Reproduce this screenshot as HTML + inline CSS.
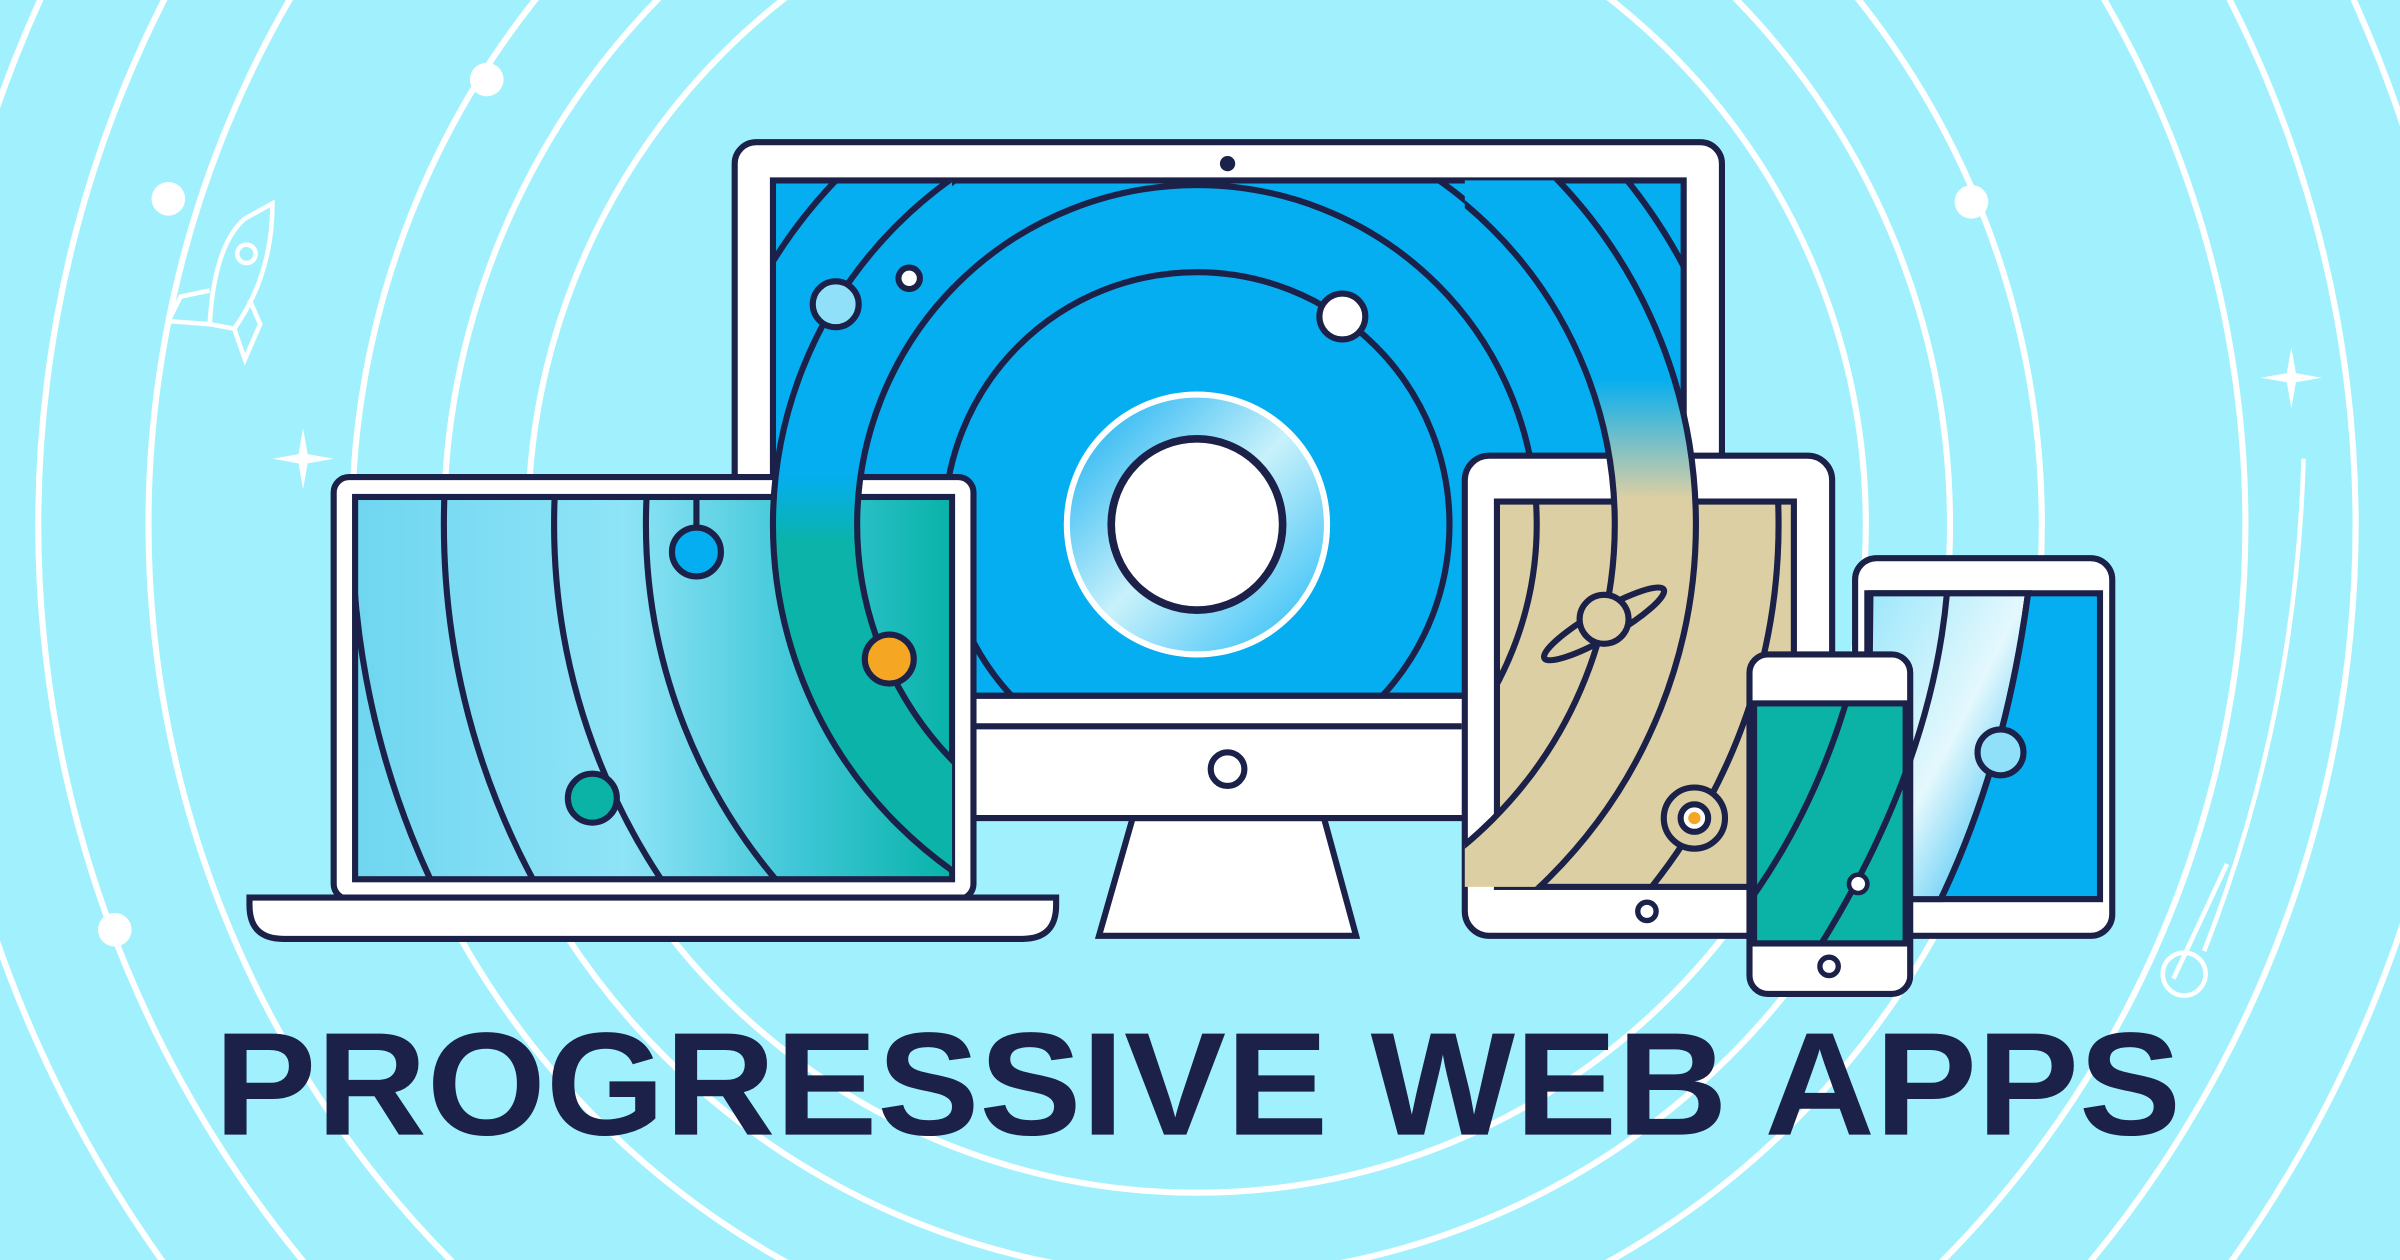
<!DOCTYPE html>
<html><head><meta charset="utf-8"><style>
html,body{margin:0;padding:0;background:#a0f0fd;overflow:hidden;width:2400px;height:1260px;position:relative}
svg{display:block;position:absolute;left:0;top:0}
</style></head><body>
<svg width="2400" height="1260" viewBox="0 0 1568 824" preserveAspectRatio="none" xmlns="http://www.w3.org/2000/svg">
<defs>
<linearGradient id="lap" x1="0" y1="0" x2="1" y2="0">
<stop offset="0" stop-color="#6fd6f0"/><stop offset="0.45" stop-color="#8fe4f7"/><stop offset="0.75" stop-color="#3cc6d6"/><stop offset="1" stop-color="#08b3a8"/></linearGradient>
<linearGradient id="bandL" gradientUnits="userSpaceOnUse" x1="0" y1="118" x2="0" y2="575">
<stop offset="0" stop-color="#04aef0"/><stop offset="0.42" stop-color="#04aef0"/><stop offset="0.52" stop-color="#0bb3a8"/><stop offset="1" stop-color="#0bb3a8"/></linearGradient>
<linearGradient id="bandR" gradientUnits="userSpaceOnUse" x1="0" y1="118" x2="0" y2="580">
<stop offset="0" stop-color="#04aef0"/><stop offset="0.28" stop-color="#04aef0"/><stop offset="0.45" stop-color="#dccfa3"/><stop offset="1" stop-color="#dccfa3"/></linearGradient>
<linearGradient id="ring" x1="0" y1="0" x2="1" y2="1">
<stop offset="0" stop-color="#0aaaf0"/><stop offset="0.5" stop-color="#c8f1fb"/><stop offset="1" stop-color="#20b8f5"/></linearGradient>
<linearGradient id="t2" x1="0" y1="0" x2="1" y2="1">
<stop offset="0" stop-color="#9be7fb"/><stop offset="0.5" stop-color="#e4f8fd"/><stop offset="1" stop-color="#04aef0"/></linearGradient>
<clipPath id="mon"><rect x="505" y="118" width="595" height="337"/></clipPath>
<clipPath id="lapc"><rect x="232" y="325" width="390" height="250"/></clipPath>
<clipPath id="tabc"><rect x="978" y="328" width="194" height="252"/></clipPath>
<clipPath id="t2c"><rect x="1220" y="388" width="152" height="200"/></clipPath>
<clipPath id="phc"><rect x="1146" y="460" width="99" height="157"/></clipPath>
<clipPath id="bl"><rect x="232" y="118" width="390" height="457"/></clipPath>
<clipPath id="br"><rect x="957" y="118" width="215" height="462"/></clipPath>
</defs>
<rect width="1568" height="824" rx="22" fill="#a0f0fd"/>
<g fill="none" stroke="#fff" stroke-width="4">
<circle cx="782" cy="343" r="437"/>
<circle cx="782" cy="343" r="492"/>
<circle cx="782" cy="343" r="552"/>
<circle cx="782" cy="343" r="685"/>
<circle cx="782" cy="343" r="757"/>
<circle cx="782" cy="343" r="830"/>
</g>
<g fill="#fff"><circle cx="110" cy="130" r="11"/><circle cx="318" cy="52" r="11"/><circle cx="1288" cy="132" r="11"/><circle cx="75" cy="608" r="11"/></g>
<g fill="#fff">
<path d="M198 280 L201 297 L218 300 L201 303 L198 320 L195 303 L178 300 L195 297Z"/>
<path d="M1075 125 L1078 142 L1095 145 L1078 148 L1075 165 L1072 148 L1055 145 L1072 142Z"/>
<path d="M1497 227 L1500 244 L1517 247 L1500 250 L1497 267 L1494 250 L1477 247 L1494 244Z"/>
</g>
<g fill="none" stroke="#fff" stroke-width="3">
<path d="M178 133 L160 143 Q140 160 137 212 L153 215 Q178 180 178 133Z"/><circle cx="161" cy="166" r="6"/>
<path d="M137 190 L118 194 L110 210 L137 212"/><path d="M153 215 L160 235 L170 212 L163 196"/>
<path d="M1455 565 L1420 640"/><circle cx="1427" cy="637" r="14"/><path d="M1505 300 Q1500 470 1440 622"/>
</g>
<!-- monitor -->
<g stroke="#1b2148" stroke-width="4">
<path d="M740 535 L865 535 L886 612 L718 612Z" fill="#fff"/>
<rect x="480" y="93" width="645" height="442" rx="14" fill="#fff"/>
<rect x="505" y="118" width="595" height="337" fill="#04aef0"/>
<line x1="635" y1="475" x2="955" y2="475"/>
<line x1="480" y1="455" x2="1125" y2="455"/>
</g>
<circle cx="802" cy="107" r="5" fill="#1b2148"/>
<circle cx="802" cy="503" r="11" fill="#fff" stroke="#1b2148" stroke-width="4"/>
<g clip-path="url(#mon)" fill="none" stroke="#1b2148" stroke-width="4">
<circle cx="782" cy="343" r="165"/>
<circle cx="782" cy="343" r="222"/>
<circle cx="782" cy="343" r="360"/>
<circle cx="782" cy="343" r="275" />
<circle cx="782" cy="343" r="326"/>
<circle cx="782" cy="343" r="420"/>
</g>
<!-- laptop -->
<g stroke="#1b2148" stroke-width="4">
<rect x="218" y="312" width="418" height="276" rx="10" fill="#fff"/>
<rect x="232" y="325" width="390" height="250" fill="url(#lap)"/>
<path d="M163 587 L690 587 L690 592 Q690 614 668 614 L185 614 Q163 614 163 592Z" fill="#fff"/>
</g>
<g clip-path="url(#lapc)" fill="none" stroke="#1b2148" stroke-width="4">
<circle cx="782" cy="343" r="420"/><circle cx="782" cy="343" r="360"/><circle cx="782" cy="343" r="492"/><circle cx="782" cy="343" r="552"/>
<line x1="455" y1="325" x2="455" y2="345"/>
</g>
<!-- tablet -->
<g stroke="#1b2148" stroke-width="4">
<rect x="957" y="298" width="240" height="314" rx="16" fill="#fff"/>
<rect x="978" y="328" width="194" height="252" fill="#dccfa3"/>
</g>
<circle cx="1076" cy="596" r="6" fill="#fff" stroke="#1b2148" stroke-width="3.5"/>
<g clip-path="url(#tabc)" fill="none" stroke="#1b2148" stroke-width="4">
<circle cx="782" cy="343" r="380"/><circle cx="782" cy="343" r="222"/>
</g>
<!-- gradient band -->
<g clip-path="url(#bl)">
<path d="M782 343 m-277 0 a277 277 0 1 0 554 0 a277 277 0 1 0 -554 0 Z M782 343 m-222 0 a222 222 0 1 1 444 0 a222 222 0 1 1 -444 0 Z" fill="url(#bandL)" fill-rule="evenodd" stroke="#1b2148" stroke-width="4"/>
</g>
<g clip-path="url(#br)">
<path d="M782 343 m-326 0 a326 326 0 1 0 652 0 a326 326 0 1 0 -652 0 Z M782 343 m-273 0 a273 273 0 1 1 546 0 a273 273 0 1 1 -546 0 Z" fill="url(#bandR)" fill-rule="evenodd" stroke="#1b2148" stroke-width="4"/>
</g>
<!-- tablet 2 -->
<g stroke="#1b2148" stroke-width="4">
<rect x="1212" y="365" width="168" height="247" rx="14" fill="#fff"/>
<rect x="1220" y="388" width="152" height="200" fill="#04aef0"/>
<path d="M1222 388 L1325 388 Q1310 500 1268 588 L1220 588Z" fill="url(#t2)"/>
</g>
<g clip-path="url(#t2c)" fill="none" stroke="#1b2148" stroke-width="4">
<path d="M1272 388 Q1262 500 1190 617"/><path d="M1325 388 Q1310 500 1268 588"/>
</g>
<!-- phone -->
<g stroke="#1b2148" stroke-width="4">
<rect x="1143" y="428" width="105" height="222" rx="12" fill="#fff"/>
<rect x="1146" y="460" width="99" height="157" fill="#0bb3a6"/>
<line x1="1143" y1="617" x2="1248" y2="617"/>
</g>
<circle cx="1195" cy="632" r="6" fill="#fff" stroke="#1b2148" stroke-width="3.5"/>
<g clip-path="url(#phc)" fill="none" stroke="#1b2148" stroke-width="4">
<path d="M1222 388 Q1205 500 1146 585"/><path d="M1272 388 Q1262 500 1190 617"/>
</g>
<!-- center -->
<circle cx="782" cy="343" r="85" fill="url(#ring)" stroke="#fff" stroke-width="4"/>
<circle cx="782" cy="343" r="56" fill="#fff" stroke="#1b2148" stroke-width="5"/>
<!-- planets -->
<g stroke="#1b2148" stroke-width="4">
<circle cx="546" cy="199" r="15" fill="#8fe0f8"/>
<circle cx="594" cy="182" r="7" fill="#fff"/>
<circle cx="877" cy="207" r="15" fill="#fff"/>
<circle cx="455" cy="361" r="16" fill="#04aef0"/>
<circle cx="581" cy="431" r="16" fill="#f5a623"/>
<circle cx="387" cy="522" r="16" fill="#0bb3a6"/>
<circle cx="1107" cy="535" r="20" fill="#dccfa3"/><circle cx="1107" cy="535" r="9" fill="#fff"/>
<circle cx="1307" cy="492" r="15" fill="#8fe0f8"/>
<circle cx="1214" cy="578" r="6" fill="#fff" stroke-width="3"/>
<ellipse cx="1048" cy="408" rx="45" ry="9" transform="rotate(-30 1048 408)" fill="#dccfa3"/>
<circle cx="1048" cy="405" r="16" fill="#dccfa3"/>
</g>
<circle cx="1107" cy="535" r="4" fill="#f5a623"/>
<text x="140" y="742" font-family="Liberation Sans, sans-serif" font-weight="bold" font-size="96" fill="#1b2148" textLength="1285" lengthAdjust="spacingAndGlyphs">PROGRESSIVE WEB APPS</text>
</svg>
</body></html>
